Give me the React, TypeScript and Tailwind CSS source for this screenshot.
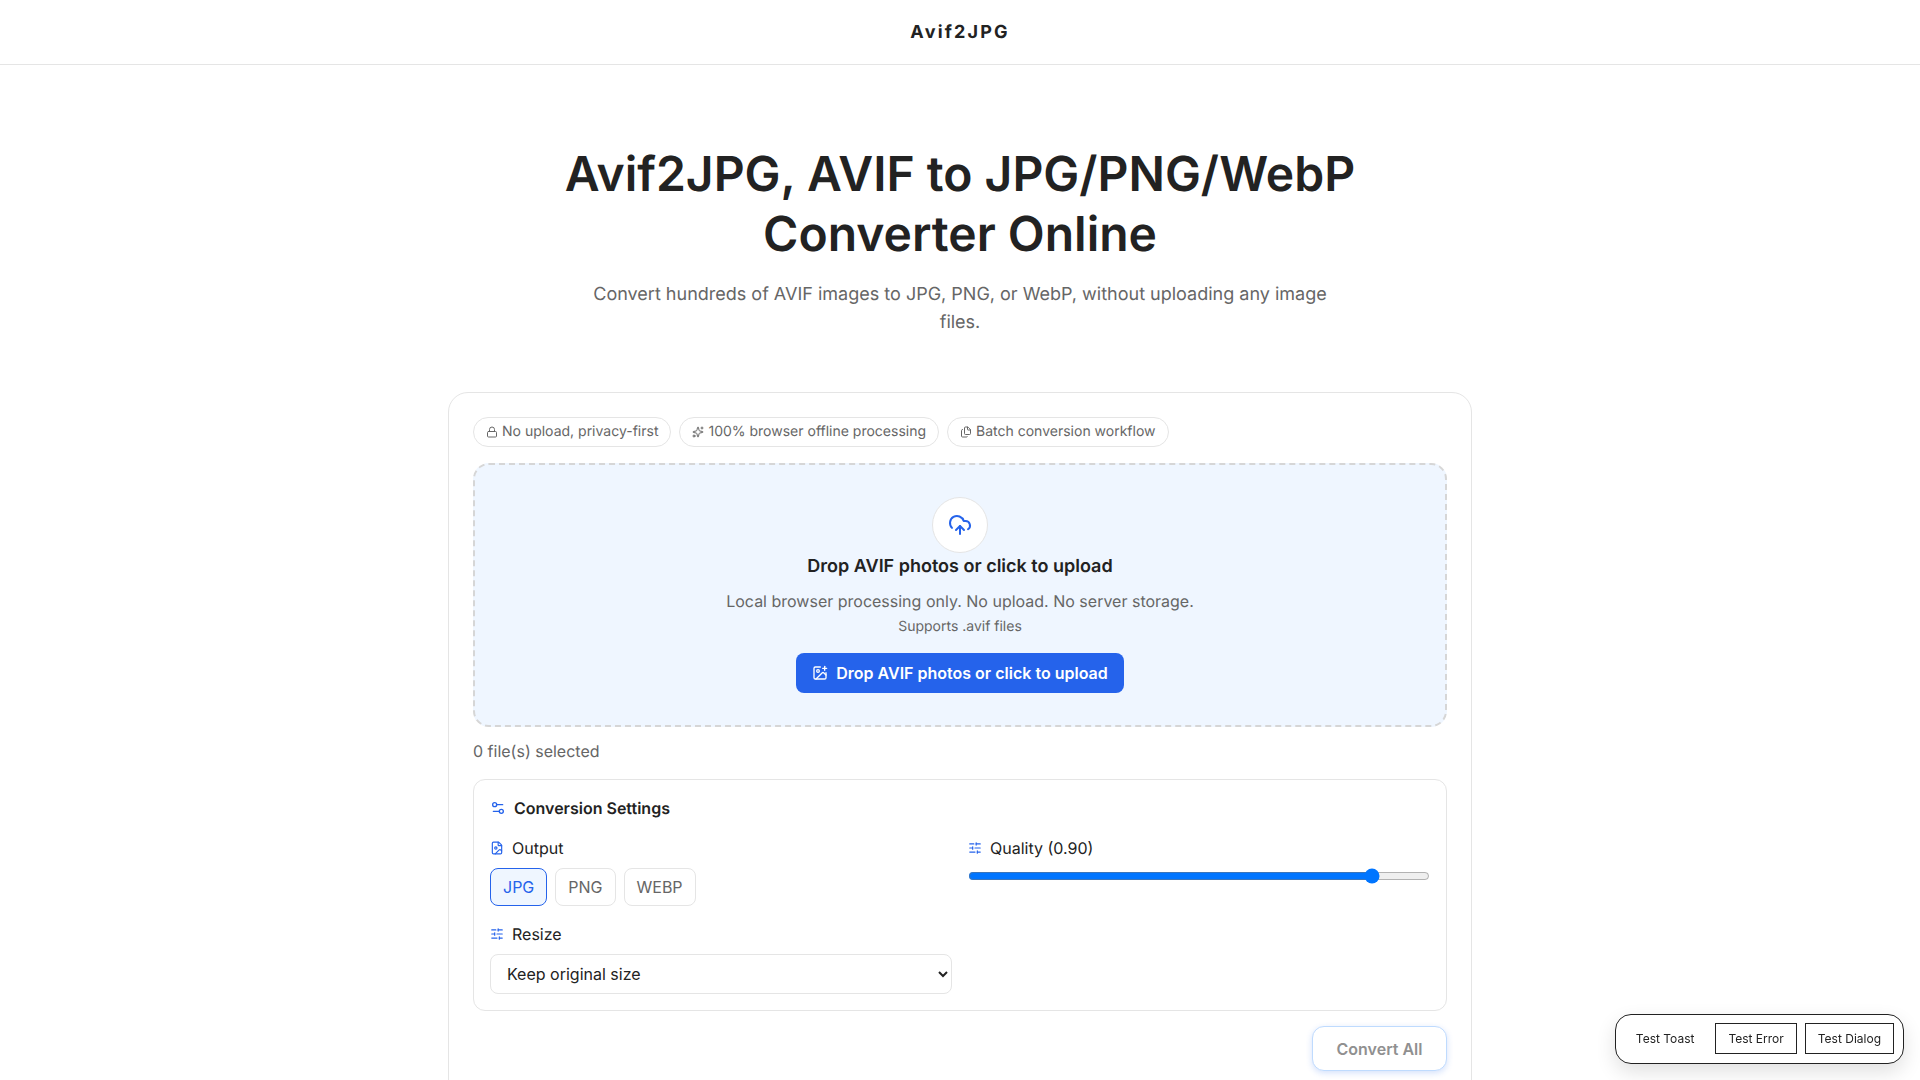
import { Lock, Sparkles, Files, CloudUpload, ImagePlus, Settings2, FileImage, SlidersHorizontal } from "lucide-react";

const font = "[font-family:Inter,'Noto_Sans',sans-serif]";

function Chip({ icon, text }: { icon: React.ReactNode; text: string }) {
  return (
    <span className="inline-flex items-center gap-1 rounded-full border border-[#e5e5e5] bg-white px-3 py-1 text-sm text-[#666666]">
      {icon}
      {text}
    </span>
  );
}

function Label({ icon, children }: { icon: React.ReactNode; children: React.ReactNode }) {
  return (
    <div className="flex items-center gap-2 text-base text-[#222222]">
      {icon}
      <span>{children}</span>
    </div>
  );
}

export default function App() {
  return (
    <div className={`${font} h-screen overflow-hidden bg-white text-[#222222] [text-rendering:geometricPrecision]`}>
      <header className="flex h-[65px] items-center justify-center border-b border-[#e5e5e5] bg-white pt-[2px]">
        <span className="text-lg font-bold tracking-[0.12em] text-[#222222]">Avif2JPG</span>
      </header>
      <main className="mx-auto flex w-[1024px] flex-col items-center pt-[79px]">
        <h1 className="text-center text-5xl leading-[60px] font-semibold text-[#222222]">
          Avif2JPG, AVIF to JPG/PNG/WebP
          <br />
          Converter Online
        </h1>
        <p className="mt-[17px] max-w-3xl text-center text-lg leading-7 text-[#666666]">
          Convert hundreds of AVIF images to JPG, PNG, or WebP, without uploading any image files.
        </p>
        <section className="mt-[55px] w-full rounded-[20px] border border-[#e5e5e5] bg-white p-6 pb-10">
          <div className="flex flex-wrap gap-2">
            <Chip icon={<Lock size={12} />} text="No upload, privacy-first" />
            <Chip icon={<Sparkles size={12} />} text="100% browser offline processing" />
            <Chip icon={<Files size={12} />} text="Batch conversion workflow" />
          </div>
          <div className="mt-4 flex flex-col items-center rounded-2xl border-2 border-dashed border-[#d6d6d6] bg-[#eff6ff] px-6 py-8">
            <div className="flex h-14 w-14 items-center justify-center rounded-full border border-[#e5e5e5] bg-white">
              <CloudUpload size={24} className="text-[#2563eb]" />
            </div>
            <div className="text-lg leading-7 font-semibold">Drop AVIF photos or click to upload</div>
            <div className="mt-2 text-base text-[#666666]">Local browser processing only. No upload. No server storage.</div>
            <div className="mt-1 text-sm text-[#666666]">Supports .avif files</div>
            <button className="mt-4 flex h-10 items-center gap-2 rounded-lg bg-[#2563eb] px-4 text-base font-semibold text-white">
              <ImagePlus size={16} />
              Drop AVIF photos or click to upload
            </button>
          </div>
          <div className="mt-3 text-base text-[#666666]">0 file(s) selected</div>
          <div className="mt-4 rounded-xl border border-[#e5e5e5] p-4">
            <div className="flex items-center gap-2 text-base font-semibold">
              <Settings2 size={16} className="text-[#2563eb]" />
              Conversion Settings
            </div>
            <div className="mt-4 grid grid-cols-2 gap-4">
              <div>
                <Label icon={<FileImage size={14} className="text-[#2563eb]" />}>Output</Label>
                <div className="mt-2 flex gap-2">
                  <button className="rounded-lg border border-[#2563eb] bg-[#eff6ff] px-3 py-[6px] text-base text-[#2563eb]">JPG</button>
                  <button className="rounded-lg border border-[#e5e5e5] bg-white px-3 py-[6px] text-base text-[#666666]">PNG</button>
                  <button className="rounded-lg border border-[#e5e5e5] bg-white px-3 py-[6px] text-base text-[#666666]">WEBP</button>
                </div>
                <div className="mt-4">
                  <Label icon={<SlidersHorizontal size={14} className="text-[#2563eb]" />}>Resize</Label>
                </div>
                <select className="mt-2 h-10 w-full rounded-lg border border-[#e5e5e5] bg-white px-3 text-base text-[#222222]" defaultValue="keep">
                  <option value="keep">Keep original size</option>
                </select>
              </div>
              <div>
                <Label icon={<SlidersHorizontal size={14} className="text-[#2563eb]" />}>Quality (0.90)</Label>
                <input type="range" min={0.1} max={1} step={0.01} defaultValue={0.9} className="mt-2 block h-4 w-full" />
              </div>
            </div>
          </div>
          <div className="mt-[15px] flex justify-end">
            <button className="h-[45px] rounded-xl border border-[#bfdbfe] bg-white px-[23.5px] text-base font-semibold text-[#909090] shadow-[0_2px_6px_rgba(37,99,235,0.2)]">
              Convert All
            </button>
          </div>
        </section>
      </main>
      <div className="fixed right-4 bottom-4 flex items-center gap-2 rounded-2xl border border-[#222222] bg-white pt-2 pr-[9px] pb-[9px] pl-[7px] shadow-[0_8px_20px_rgba(0,0,0,0.12)]">
        <button className="h-[31px] border border-white px-3 text-xs text-[#222222]">Test Toast</button>
        <button className="h-[31px] border border-[#222222] px-3 text-xs text-[#222222]">Test Error</button>
        <button className="h-[31px] border border-[#222222] px-3 text-xs text-[#222222]">Test Dialog</button>
      </div>
    </div>
  );
}
